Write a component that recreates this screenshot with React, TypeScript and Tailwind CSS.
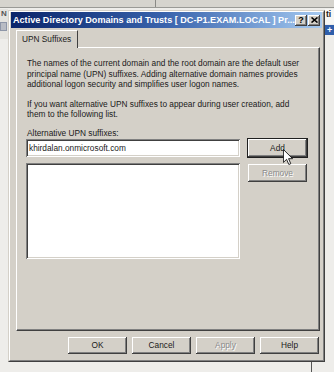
import React from "react";

const raised =
  "shadow-[inset_-1px_-1px_0_#404040,inset_1px_1px_0_#ffffff,inset_-2px_-2px_0_#808080]";
const sunken =
  "shadow-[inset_1px_1px_0_#808080,inset_-1px_-1px_0_#ffffff,inset_2px_2px_0_#404040,inset_-2px_-2px_0_#d4d0c8]";

function Btn({
  label,
  disabled,
  isDefault,
  w,
  h,
}: {
  label: string;
  disabled?: boolean;
  isDefault?: boolean;
  w: string;
  h: string;
}) {
  return (
    <div
      className={`${w} ${h} flex items-center justify-center bg-[#d4d0c8] ${raised} ${
        isDefault ? "outline outline-1 outline-[#202020]" : ""
      } ${disabled ? "text-[#8a8a8a] [text-shadow:1px_1px_0_#ffffff]" : "text-[#1a1a1a]"}`}
    >
      {label}
    </div>
  );
}

function Cursor() {
  return (
    <svg
      className="absolute left-[283px] top-[149px]"
      width="10"
      height="16"
      viewBox="0 0 12 19"
    >
      <path
        d="M0.5 0.5 L0.5 16 L4.3 12.3 L7 18.5 L9.3 17.5 L6.7 11.5 L11.5 11.5 Z"
        fill="#ffffff"
        stroke="#000000"
        strokeWidth="1"
        strokeLinejoin="miter"
      />
    </svg>
  );
}

export default function App() {
  return (
    <div className="relative w-[334px] h-[372px] overflow-hidden bg-[#eeedea] font-['Liberation_Sans',Arial,sans-serif] text-[8.3px] leading-[10.5px] text-[#1a1a1a]">
      {/* background: window strip at top */}
      <div className="absolute left-0 top-0 w-[334px] h-[8px] bg-[#d6d4ce] border-b border-[#9a9a96]" />
      <div className="absolute left-[155px] top-0 w-px h-[7px] bg-[#8a8a86]" />
      {/* left background fragments */}
      <div className="absolute left-0 top-[9px] w-[8px] h-[30px] bg-[#e4e3df]">
        <div className="text-[8px] leading-[10px] text-[#555] font-bold pl-px">N</div>
        <div className="mt-[3px] w-[7px] h-[9px] bg-[#b9bcc4] border border-[#8e96a8]" />
      </div>
      {/* right background fragments */}
      <div className="absolute left-[325px] top-[9px] w-[9px] h-[15px] bg-[#f6f6f4]">
        <div className="text-[8.5px] leading-[11px] font-bold text-[#222] pl-px">ti</div>
      </div>
      <div className="absolute left-[325px] top-[25px] w-[9px] h-[10px] bg-[#2f5eab] text-white text-[9px] leading-[10px] font-bold pl-[2px]">
        +
      </div>
      {/* line at bottom */}
      <div className="absolute left-[311px] top-[361px] w-px h-[11px] bg-[#555]" />

      {/* dialog */}
      <div className="absolute left-[8px] top-[10px] w-[317px] h-[352px] bg-[#d4d0c8] border border-t-[#d4d0c8] border-l-[#d4d0c8] border-r-[#404040] border-b-[#404040]">
        <div className="w-full h-full flex flex-col border border-t-white border-l-white border-r-[#808080] border-b-[#808080] px-px pt-0">
          {/* title bar */}
          <div className="h-[16px] flex items-center bg-gradient-to-r from-[#0a246a] via-[#3a64ad] to-[#a6caf0] pl-[2px] pr-[2px]">
            <div className="flex-1 min-w-0 text-white font-bold text-[9.1px] leading-[16px] whitespace-nowrap">
              Active Directory Domains and Trusts [ DC-P1.EXAM.LOCAL ] Pr...
            </div>
            <div
              className={`ml-[2px] w-[12px] h-[11px] bg-[#d4d0c8] ${raised} flex items-center justify-center text-[9px] font-bold leading-none text-black`}
            >
              ?
            </div>
            <div
              className={`ml-[1px] w-[12px] h-[11px] bg-[#d4d0c8] ${raised} flex items-center justify-center`}
            >
              <svg width="7" height="6" viewBox="0 0 7 6">
                <path d="M0.5 0.5 L6.5 5.5 M6.5 0.5 L0.5 5.5" stroke="#000" strokeWidth="1.6" />
              </svg>
            </div>
          </div>

          {/* body */}
          <div className="flex-1 flex flex-col pl-[5px] pr-[2px] pt-[2px]">
            {/* tab strip */}
            <div className="flex">
              <div className="relative z-10 w-[62px] h-[18px] bg-[#d4d0c8] border-l border-t border-white border-r border-r-[#404040] flex items-center pl-[5px] mb-[-1px]">
                UPN Suffixes
              </div>
            </div>
            {/* panel */}
            <div className="h-[284px] border border-t-white border-l-white border-r-[#404040] border-b-[#404040]">
              <div className="h-full border-r border-b border-[#808080] pl-[10px] pt-[10px] flex flex-col">
                <p className="w-[282px]">
                  The names of the current domain and the root domain are the default user
                  principal name (UPN) suffixes. Adding alternative domain names provides
                  additional logon security and simplifies user logon names.
                </p>
                <p className="mt-[9px] w-[282px]">
                  If you want alternative UPN suffixes to appear during user creation, add
                  them to the following list.
                </p>
                <div className="mt-[8px]">Alternative UPN suffixes:</div>
                <div className="mt-[1px] flex">
                  <div className="flex flex-col gap-[6px] ml-[-1px]">
                    <div
                      className={`w-[214px] h-[18px] bg-white ${sunken} flex items-center pl-[3px]`}
                    >
                      khirdalan.onmicrosoft.com
                    </div>
                    <div className={`w-[214px] h-[96px] bg-white ${sunken}`} />
                  </div>
                  <div className="ml-[8px] flex flex-col gap-[7px]">
                    <Btn label="Add" isDefault w="w-[59px]" h="h-[18px]" />
                    <Btn label="Remove" disabled w="w-[59px]" h="h-[18px]" />
                  </div>
                </div>
              </div>
            </div>
            {/* footer buttons */}
            <div className="mt-[6px] flex justify-end gap-[5px] pr-[1px]">
              <Btn label="OK" w="w-[59px]" h="h-[17px]" />
              <Btn label="Cancel" w="w-[59px]" h="h-[17px]" />
              <Btn label="Apply" disabled w="w-[59px]" h="h-[17px]" />
              <Btn label="Help" w="w-[59px]" h="h-[17px]" />
            </div>
          </div>
        </div>
      </div>
      <Cursor />
    </div>
  );
}
